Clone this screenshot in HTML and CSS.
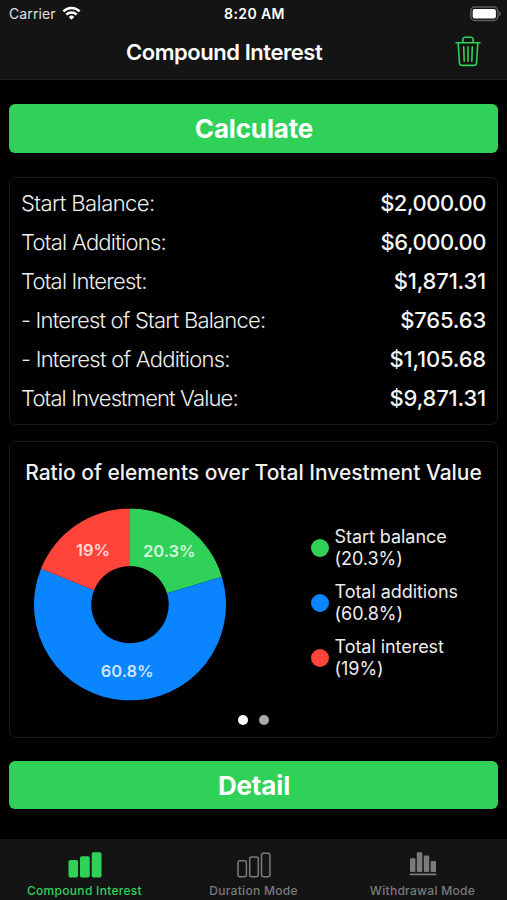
FILE: index.html
```html
<!DOCTYPE html>
<html lang="en">
<head>
<meta charset="utf-8">
<title>Compound Interest</title>
<link rel="stylesheet" href="styles.css">
</head>
<body>
<div class="app">
  <header class="top">
    <div class="status">
      <span class="carrier">Carrier
        <svg class="wifi" width="19" height="14" viewBox="0 0 20 15" fill="none" stroke="#fff" stroke-width="2.7"><path d="M1.3 5.7a12.2 12.2 0 0 1 17.400 0"/><path d="M4.500 9.200a7.800 7.800 0 0 1 11 0"/><path d="M10 14.600L7.100 11.700a4.100 4.100 0 0 1 5.800 0z" fill="#fff" stroke="none"/></svg>
      </span>
      <span class="time">8:20 AM</span>
      <svg class="battery" width="32" height="16" viewBox="0 0 32 16"><rect x=".8" y="1" width="27" height="13.400" rx="4" fill="none" stroke="#5c5c60" stroke-width="1.500"/><rect x="2.700" y="2.900" width="23.200" height="9.600" rx="2" fill="#fff"/><path d="M29.200 5.400c2.300 1 2.300 3.600 0 4.600z" fill="#66666a"/></svg>
    </div>
    <div class="nav">
      <h1 class="title">Compound Interest</h1>
      <svg class="trash" width="26" height="32" viewBox="0 0 26 32" fill="none" stroke="#30d158" stroke-width="1.600" stroke-linecap="round" stroke-linejoin="round"><path d="M1 6.700h24M3.200 6.900l1.300 20.300a2.400 2.400 0 0 0 2.400 2.200h12.200a2.400 2.400 0 0 0 2.400-2.200L22.800 6.900M7.800 6.400V3.500A2.200 2.200 0 0 1 10 1.300h6a2.200 2.200 0 0 1 2.200 2.200v2.900M8.700 10.700l.5 14.600M13 10.700v14.600M17.300 10.700l-.5 14.600"/></svg>
    </div>
  </header>
  <main class="content">
    <button class="action calculate">Calculate</button>
    <section class="card summary">
      <div class="row"><span class="label l1">Start Balance:</span><span class="value round">$2,000.00</span></div>
      <div class="row"><span class="label l2">Total Additions:</span><span class="value round">$6,000.00</span></div>
      <div class="row"><span class="label l3">Total Interest:</span><span class="value">$1,871.31</span></div>
      <div class="row"><span class="label l3">- Interest of Start Balance:</span><span class="value">$765.63</span></div>
      <div class="row"><span class="label l2">- Interest of Additions:</span><span class="value">$1,105.68</span></div>
      <div class="row"><span class="label l4">Total Investment Value:</span><span class="value">$9,871.31</span></div>
    </section>
    <section class="card ratio">
      <h2 class="ratio-title">Ratio of elements over Total Investment Value</h2>
      <div class="chart">
        <svg class="donut" width="192" height="192" viewBox="0 0 192 192">
          <path fill="#30d158" d="M96 0A96 96 0 0 1 187.840 68.070L133.020 84.740A38.700 38.700 0 0 0 96 57.300z"/>
          <path fill="#0a84ff" d="M187.840 68.070A96 96 0 1 1 6.970 60.100L60.110 81.530A38.700 38.700 0 1 0 133.020 84.740z"/>
          <path fill="#ff453a" d="M6.970 60.100A96 96 0 0 1 96 0V57.300A38.700 38.700 0 0 0 60.110 81.530z"/>
          <g class="share" text-anchor="middle"><text x="135.300" y="48.800">20.3%</text><text x="93.200" y="168">60.8%</text><text x="59" y="47.200">19%</text></g>
        </svg>
        <ul class="legend">
          <li><i class="dot green"></i><span>Start balance<br>(20.3%)</span></li>
          <li><i class="dot blue"></i><span>Total additions<br>(60.8%)</span></li>
          <li><i class="dot red"></i><span>Total interest<br>(19%)</span></li>
        </ul>
      </div>
      <div class="pager"><i class="on"></i><i></i></div>
    </section>
    <button class="action detail">Detail</button>
  </main>
  <nav class="tabs">
    <div class="tab active">
      <svg width="34" height="26" viewBox="0 0 34 26" fill="currentColor"><rect x=".5" y="8" width="9.600" height="17.500" rx="1.800"/><rect x="12" y="4.300" width="9.800" height="21.200" rx="1.800"/><rect x="23.700" y=".3" width="9.800" height="25.200" rx="1.800"/></svg>
      <span>Compound Interest</span>
    </div>
    <div class="tab">
      <svg width="34" height="26" viewBox="0 0 34 26" fill="none" stroke="currentColor" stroke-width="1.500"><rect x="1" y="8.700" width="8.400" height="16" rx="2"/><rect x="12.700" y="5" width="8.600" height="19.700" rx="2"/><rect x="24.500" y="1.200" width="8.400" height="23.500" rx="2"/></svg>
      <span>Duration Mode</span>
    </div>
    <div class="tab withdrawal">
      <svg width="28" height="26" viewBox="0 0 28 26" fill="currentColor"><rect x="1" y="6.200" width="5.400" height="13.800" rx="1"/><rect x="7.800" y=".3" width="5.500" height="19.700" rx="1"/><rect x="14.800" y="3.500" width="5.400" height="16.500" rx="1"/><rect x="21.600" y="9" width="5.400" height="11" rx="1"/><rect x=".5" y="21.500" width="27" height="1.700" rx=".8"/></svg>
      <span>Withdrawal Mode</span>
    </div>
  </nav>
</div>
</body>
</html>
```

FILE: styles.css
```css
* { box-sizing: border-box; }
body { margin: 0; background: #000; color: #fff; font-family: Inter, "Liberation Sans", sans-serif; }
h1, h2, ul { margin: 0; padding: 0; }
svg { display: block; flex: none; }
.app { display: flex; flex-direction: column; height: 900px; overflow: hidden; }
.top { height: 80px; background: #141414; border-bottom: 1px solid #202020; }
.status { height: 27px; display: grid; grid-template-columns: 1fr auto 1fr; align-items: center; padding: 0 5px 0 9px; font-size: 14px; }
.carrier { display: flex; align-items: center; gap: 6px; color: #e0e0e0; letter-spacing: .1px; }
.wifi { margin-top: -2px; }
.time { font-weight: 600; letter-spacing: .4px; margin-left: -2px; }
.battery { justify-self: end; }
.nav { height: 52px; display: flex; justify-content: space-between; align-items: center; padding: 0 26px 2px 126px; }
.title { font-size: 22px; font-weight: 600; letter-spacing: -.45px; }
.content { flex: 1; padding: 24px 9px 0; }
.action { display: block; width: 489px; border: 0; border-radius: 6px; padding: 0 0 0 1px; background: #30d158; color: #fff; font: 700 26px Inter, "Liberation Sans", sans-serif; letter-spacing: -.15px; }
.calculate { height: 49px; }
.card { width: 489px; border: 1px solid #1b1b1b; border-radius: 7px; }
.summary { height: 248px; margin-top: 24px; padding: 5px 11px; }
.row { display: flex; justify-content: space-between; align-items: center; height: 39.1px; }
.label { font-size: 22px; font-weight: 300; color: #eee; }
.l1 { letter-spacing: -.56px; }
.l2 { letter-spacing: -.75px; }
.l3 { letter-spacing: -.8px; }
.l4 { letter-spacing: -.87px; }
.value { font-size: 22px; font-weight: 500; letter-spacing: -.2px; color: #f5f5f5; }
.round { letter-spacing: -.5px; }
.ratio { height: 297px; margin-top: 16px; padding-top: 17px; }
.ratio-title { font-size: 21px; line-height: 28px; font-weight: 500; text-align: center; white-space: nowrap; letter-spacing: -.02px; color: #f2f2f2; }
.chart { display: flex; justify-content: space-between; height: 192px; margin: 22px 22.5px 0 24px; }
.donut { transform: translateY(-.4px); }
.share { font-size: 16.5px; font-weight: 600; fill: #fff; fill-opacity: .8; }
.legend { width: 164px; padding-top: 17px; list-style: none; font-size: 18px; line-height: 21.800px; letter-spacing: -.05px; color: #ededed; }
.legend li { display: flex; align-items: center; gap: 6px; height: 44px; margin-bottom: 11px; white-space: nowrap; }
.dot { width: 18px; height: 18px; border-radius: 50%; flex: none; }
.green { background: #30d158; }
.blue { background: #0a84ff; }
.red { background: #ff453a; }
.pager { display: flex; justify-content: center; gap: 11px; margin-top: 14px; }
.pager i { width: 10px; height: 10px; border-radius: 50%; background: #aaa; }
.pager .on { background: #fff; }
.detail { height: 48px; margin-top: 23px; }
.tabs { height: 61px; padding-top: 13px; display: grid; grid-template-columns: repeat(3, 1fr); background: #141414; }
.tab { display: flex; flex-direction: column; align-items: center; gap: 5px; color: #7b7b7b; font-size: 12px; line-height: 16px; font-weight: 500; letter-spacing: .3px; white-space: nowrap; }
.active { color: #30d158; }
```
